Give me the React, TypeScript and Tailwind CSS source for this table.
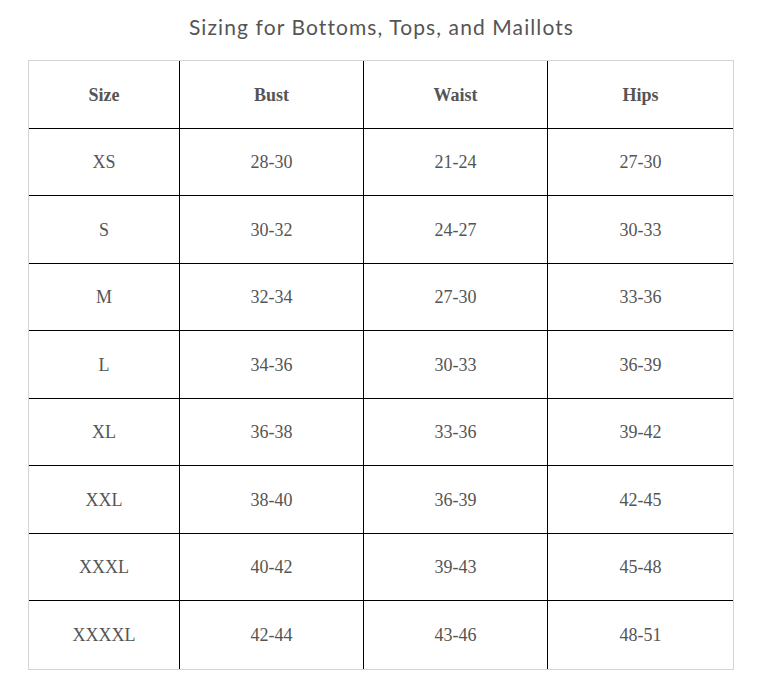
const headers = ["Size", "Bust", "Waist", "Hips"];

const rows: string[][] = [
  ["XS", "28-30", "21-24", "27-30"],
  ["S", "30-32", "24-27", "30-33"],
  ["M", "32-34", "27-30", "33-36"],
  ["L", "34-36", "30-33", "36-39"],
  ["XL", "36-38", "33-36", "39-42"],
  ["XXL", "38-40", "36-39", "42-45"],
  ["XXXL", "40-42", "39-43", "45-48"],
  ["XXXXL", "42-44", "43-46", "48-51"],
];

function Cell({
  children,
  last,
  bottom,
  bold,
}: {
  children: React.ReactNode;
  last: boolean;
  bottom: boolean;
  bold?: boolean;
}) {
  return (
    <div
      className={`flex h-[67.5px] items-center justify-center border-black pt-[2px] ${
        last ? "" : "border-r"
      } ${bottom ? "" : "border-b"} ${bold ? "font-bold" : ""}`}
    >
      {children}
    </div>
  );
}

export default function App() {
  const all = [headers, ...rows];
  return (
    <div className="min-h-[679px] w-[763px] bg-white">
      <h1 className="pt-[14px] text-center font-['Lato',sans-serif] text-[21px] leading-[26px] tracking-[1.1px] text-[#555]">
        Sizing for Bottoms, Tops, and Maillots
      </h1>
      <div className="ml-[28px] mt-[20px] w-[706px] border border-[#d4d4d4]">
        <div className="grid grid-cols-[151px_184px_184px_1fr] font-['Liberation_Serif',serif] text-[18px] text-[#555]">
          {all.map((r, i) =>
            r.map((v, j) => (
              <Cell
                key={`${i}-${j}`}
                last={j === 3}
                bottom={i === all.length - 1}
                bold={i === 0}
              >
                {v}
              </Cell>
            ))
          )}
        </div>
      </div>
    </div>
  );
}
